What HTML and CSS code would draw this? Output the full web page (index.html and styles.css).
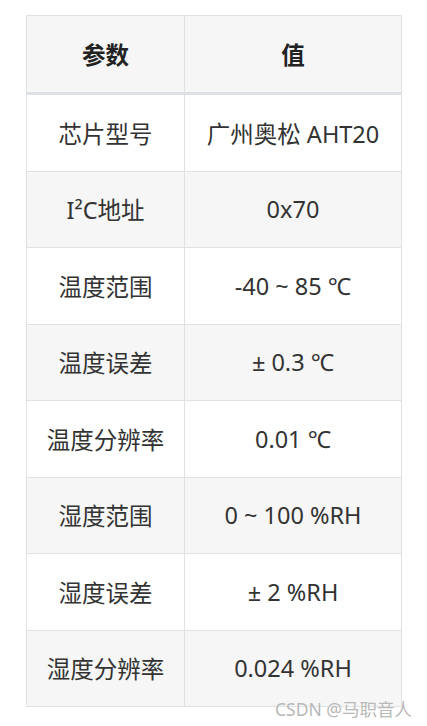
FILE: index.html
```html
<!DOCTYPE html>
<html lang="zh">
<head>
<meta charset="utf-8">
<link rel="stylesheet" href="styles.css">
</head>
<body>
<div class="page">
  <table class="spec">
    <thead>
      <tr><th class="c1">参数</th><th class="c2">值</th></tr>
    </thead>
    <tbody>
      <tr><td>芯片型号</td><td>广州奥松 AHT20</td></tr>
      <tr><td>I²C地址</td><td>0x70</td></tr>
      <tr><td>温度范围</td><td>-40 ~ 85 ℃</td></tr>
      <tr><td>温度误差</td><td>± 0.3 ℃</td></tr>
      <tr><td>温度分辨率</td><td>0.01 ℃</td></tr>
      <tr><td>湿度范围</td><td>0 ~ 100 %RH</td></tr>
      <tr><td>湿度误差</td><td>± 2 %RH</td></tr>
      <tr><td>湿度分辨率</td><td>0.024 %RH</td></tr>
    </tbody>
  </table>
  <div class="watermark">CSDN @马职音人</div>
</div>
</body>
</html>
```

FILE: styles.css
```css
html, body {
  margin: 0;
  padding: 0;
  background: #ffffff;
}
.page {
  position: relative;
  width: 427px;
  height: 726px;
  padding: 15px 0 0 26px;
  box-sizing: border-box;
  font-family: "Noto Sans", "Noto Sans CJK SC", sans-serif;
}
.spec {
  border-collapse: collapse;
  table-layout: fixed;
  width: 373px;
  font-size: 23.5px;
  color: #333333;
}
.spec th, .spec td {
  border: 1px solid #dfe2e5;
  text-align: center;
  vertical-align: middle;
  padding: 0;
}
.spec th {
  background: #f6f6f6;
  font-weight: bold;
  color: #222222;
  height: 76px;
  border-bottom: 3px solid #dde0e6;
}
.spec .c1 { width: 157px; }
.spec .c2 { width: 216px; }
.spec td {
  height: 75.5px;
}
.spec tbody tr:nth-child(even) td {
  background: #f6f6f6;
}
.watermark {
  position: absolute;
  left: 275px;
  top: 696px;
  font-size: 17.5px;
  color: #b8b8b8;
  text-shadow: 0 0 1px #ffffff;
  white-space: nowrap;
}
```
